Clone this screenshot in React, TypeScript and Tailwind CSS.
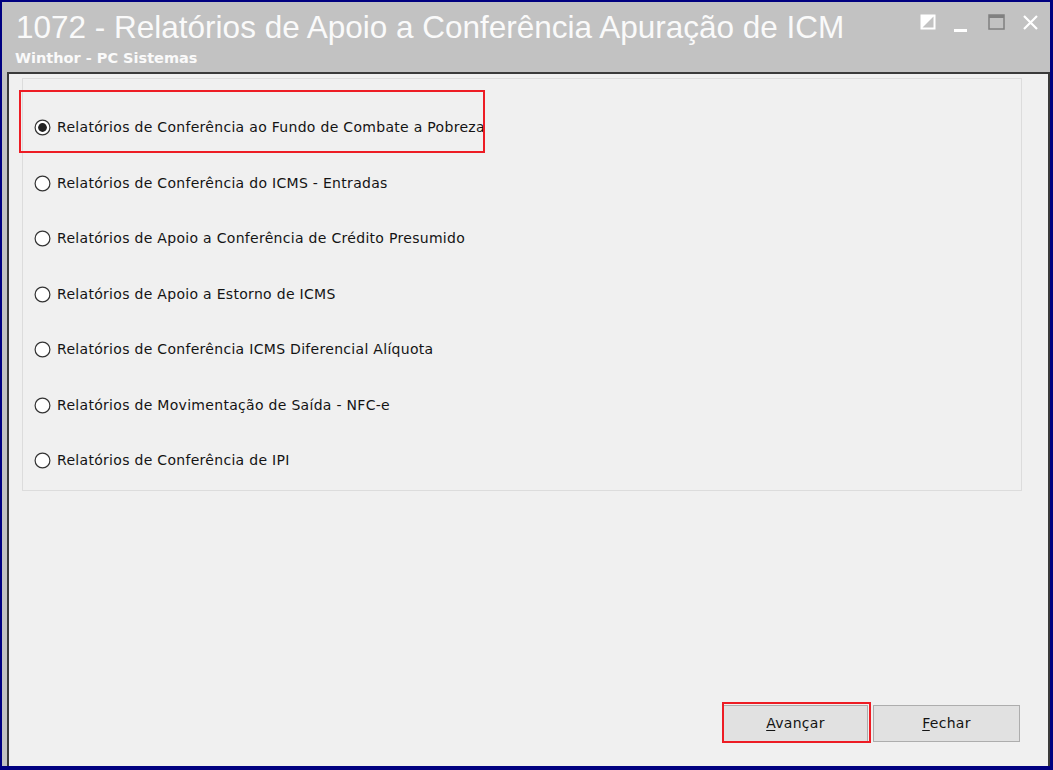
import React from "react";

const options = [
  "Relatórios de Conferência ao Fundo de Combate a Pobreza",
  "Relatórios de Conferência do ICMS - Entradas",
  "Relatórios de Apoio a Conferência de Crédito Presumido",
  "Relatórios de Apoio a Estorno de ICMS",
  "Relatórios de Conferência ICMS Diferencial Alíquota",
  "Relatórios de Movimentação de Saída - NFC-e",
  "Relatórios de Conferência de IPI",
];

function Radio({ checked }: { checked: boolean }) {
  return (
    <svg width="17" height="17" viewBox="0 0 17 17" className="shrink-0">
      <circle cx="8.5" cy="8.5" r="7.4" fill="#ffffff" stroke="#333333" strokeWidth="1.2" />
      {checked && <circle cx="8.5" cy="8.5" r="4.4" fill="#222222" />}
    </svg>
  );
}

export default function App() {
  return (
    <div
      className="relative w-[1053px] h-[770px] bg-[#000080] pt-[2px] pl-[2px] pr-[3px] pb-[4px] overflow-hidden"
      style={{ fontFamily: '"DejaVu Sans", sans-serif' }}
    >
      <div className="flex flex-col w-full h-full bg-[#c2c2c2]">
        {/* Title bar */}
        <div className="relative h-[70px] shrink-0">
          <div
            className="absolute left-[14px] top-[7px] whitespace-nowrap text-[31.5px] leading-[36px] text-[#fafafa]"
            style={{ fontFamily: '"Liberation Sans", Arial, sans-serif' }}
          >
            1072 - Relatórios de Apoio a Conferência Apuração de ICM
          </div>
          <div className="absolute left-[13px] top-[47px] text-[14.5px] leading-[18px] font-bold text-[#fafafa] whitespace-nowrap">
            Winthor - PC Sistemas
          </div>
          {/* window buttons */}
          <div className="absolute right-0 top-0 flex">
            <svg width="150" height="40" viewBox="0 0 150 40">
              <rect x="21.5" y="13.5" width="13" height="13" fill="none" stroke="#ffffff" strokeWidth="2" />
              <polygon points="21,13 35,13 21,27" fill="#ffffff" />
              <rect x="54" y="27" width="13" height="3" fill="#ffffff" />
              <rect x="89" y="13" width="15" height="14" fill="none" stroke="#808080" strokeWidth="1.5" />
              <rect x="89" y="13" width="15" height="3" fill="#808080" />
              <path d="M124 14 L137 27 M137 14 L124 27" stroke="#ffffff" strokeWidth="2.2" />
            </svg>
          </div>
        </div>

        {/* Content frame */}
        <div className="flex-1 ml-[5px] border-l-2 border-t-2 border-r-2 border-[#3a3a3a] bg-[#f0f0f0] flex flex-col">
          <div className="ml-[13px] mr-[26px] mt-[4px] h-[413px] border border-[#dcdcdc] pt-[21px] pl-[11px]">
            {options.map((o, i) => (
              <div key={o} className="h-[55.5px] flex items-center gap-[6px]">
                <Radio checked={i === 0} />
                <span className="text-[14px] tracking-[0.3px] text-[#141414] whitespace-nowrap">{o}</span>
              </div>
            ))}
          </div>
          <div className="flex-1" />
          <div className="flex justify-end gap-[5px] mr-[28px] mb-[24px]">
            <button className="w-[145px] h-[37px] bg-[#e1e1e1] border border-[#adadad] text-[14px] tracking-[0.3px] text-[#141414]">
              <span className="underline underline-offset-2">A</span>vançar
            </button>
            <button className="w-[147px] h-[37px] bg-[#e1e1e1] border border-[#adadad] text-[14px] tracking-[0.3px] text-[#141414]">
              <span className="underline underline-offset-2">F</span>echar
            </button>
          </div>
        </div>
      </div>

      {/* red annotation boxes */}
      <div className="absolute left-[19px] top-[90px] w-[466px] h-[63px] border-2 border-[#ed1c24] pointer-events-none" />
      <div className="absolute left-[722px] top-[702px] w-[149px] h-[41px] border-2 border-[#ed1c24] pointer-events-none" />
    </div>
  );
}
